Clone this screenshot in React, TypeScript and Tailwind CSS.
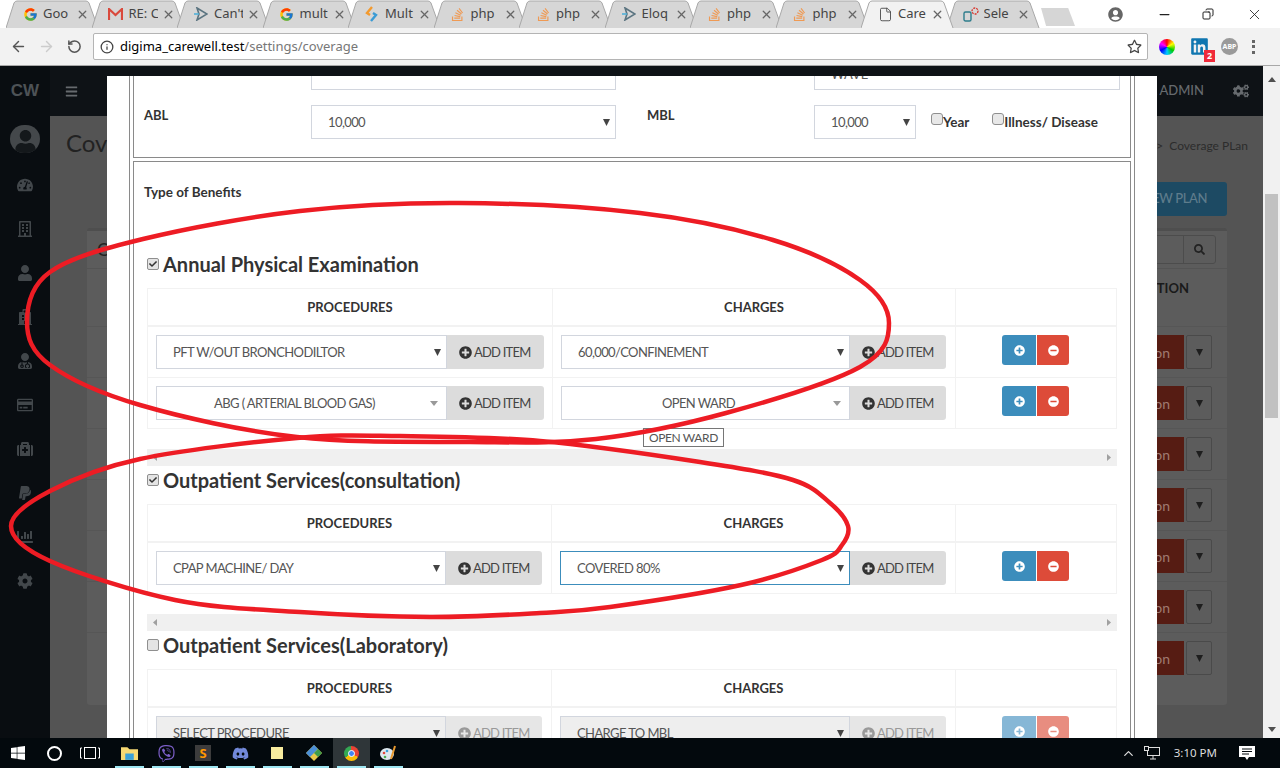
import React from 'react';
import { FaCheck, FaChartBar, FaCog, FaCogs, FaDiscord, FaHospital, FaLinkedin, FaMedkit, FaMinusCircle, FaPaypal, FaPlusCircle, FaRegBuilding, FaRegCreditCard, FaSearch, FaStackOverflow, FaTachometerAlt, FaUser, FaUserCircle, FaUserMd, FaViber, FaWindows, FaBars, FaRegStar } from 'react-icons/fa';
import { FcGoogle } from 'react-icons/fc';
import { ArrowLeft, ArrowRight, ChevronUp, File, Info, Minus, RotateCw, X, Copy } from 'lucide-react';

const FONT = 'font-["Lato","Noto_Sans",sans-serif]';

function Caret({ muted, dark }: { muted?: boolean; dark?: boolean }) {
    if (muted) {
        return (
            <svg width="8" height="5" viewBox="0 0 8 5" className="shrink-0 mr-[3px]">
                <path d="M0 0H8L4 5Z" fill="#999" />
            </svg>
        );
    }
    return (
        <svg width="7" height="7" viewBox="0 0 7 7" className="shrink-0">
            <path d="M0 0H7L3.5 7Z" fill={dark ? '#1e1e1e' : '#444'} />
        </svg>
    );
}

function Arrowish() {
    return (
        <svg width="14" height="14" viewBox="0 0 14 14">
            <path d="M3 1L13 7L3 13L5 7Z" fill="none" stroke="#5b7480" strokeWidth="1.6" />
            <path d="M0 7H5" stroke="#4fb0d8" strokeWidth="1.6" />
        </svg>
    );
}

const tabs: { title: string; icon: React.ReactNode; active?: boolean }[] = [
    { title: 'Goo', icon: <FcGoogle size={15} /> },
    {
        title: 'RE: C',
        icon: (
            <svg width="15" height="13" viewBox="0 0 15 13">
                <path d="M1 12V1L7.5 7L14 1V12" fill="none" stroke="#d9493c" strokeWidth="2.2" />
            </svg>
        ),
    },
    { title: "Can't", icon: <Arrowish /> },
    { title: 'mult', icon: <FcGoogle size={15} /> },
    {
        title: 'Mult',
        icon: (
            <svg width="14" height="16" viewBox="0 0 14 16">
                <path d="M7 1L2 7L5 9" fill="none" stroke="#f39a2e" strokeWidth="2.4" />
                <path d="M8 7L11 9L6 15" fill="none" stroke="#3a9bd5" strokeWidth="2.4" />
            </svg>
        ),
    },
    { title: 'php', icon: <FaStackOverflow size={15} color="#ef9a54" /> },
    { title: 'php', icon: <FaStackOverflow size={15} color="#ef9a54" /> },
    { title: 'Eloq', icon: <Arrowish /> },
    { title: 'php', icon: <FaStackOverflow size={15} color="#ef9a54" /> },
    { title: 'php', icon: <FaStackOverflow size={15} color="#ef9a54" /> },
    { title: 'Care', icon: <File size={15} strokeWidth={1.4} color="#444" />, active: true },
    {
        title: 'Sele',
        icon: (
            <svg width="16" height="15" viewBox="0 0 16 15">
                <rect x="1" y="5" width="7" height="9" rx="1.5" fill="none" stroke="#2e7d8c" strokeWidth="1.4" />
                <circle cx="12" cy="4" r="3" fill="none" stroke="#d9342b" strokeWidth="1.3" strokeDasharray="2 1" />
            </svg>
        ),
    },
];

function Tab({ title, icon, active }: { title: string; icon: React.ReactNode; active?: boolean }) {
    return (
        <div className={`relative w-[93px] h-[28px] shrink-0 -mr-[7.5px] flex items-center pl-[16px] ${active ? 'z-10' : ''}`}>
            <svg className="absolute inset-0" width="93" height="28" viewBox="0 0 93 28">
                <path d="M0 28L8 3Q9 1 11 1H80Q82 1 83 3L92 28" fill={active ? '#f2f2f2' : '#d6d6d6'} stroke="#a8a8a8" />
            </svg>
            <div className="relative w-[16px] flex justify-center shrink-0">{icon}</div>
            <span className="relative ml-[5px] w-[29px] overflow-hidden whitespace-nowrap text-[13px] text-[#444]">{title}</span>
            <X className="relative ml-[4px] shrink-0" size={13} strokeWidth={2.4} color="#666" />
        </div>
    );
}

function BrowserChrome() {
    return (
        <div className="shrink-0 font-['Noto_Sans',sans-serif]">
            <div className="h-[28px] bg-white flex relative pl-[6px]">
                {tabs.map((t, i) => (
                    <Tab key={i} {...t} />
                ))}
                <div className="ml-[9px] mt-[8px] w-[34px] h-[18px] bg-[#d6d6d6] [clip-path:polygon(0_0,80%_0,100%_100%,15%_100%)]" />
                <div className="absolute right-0 top-0 h-[28px] flex items-center">
                    <FaUserCircle size={15} color="#666" className="mr-[34px]" />
                    <Minus size={15} color="#222" className="mr-[30px]" />
                    <Copy size={12} color="#222" className="mr-[32px] -scale-x-100" />
                    <X size={17} strokeWidth={1.2} color="#222" className="mr-[17px]" />
                </div>
            </div>
            <div className="h-[38px] bg-[#f2f2f2] border-b border-[#a8a8a8] flex items-center relative">
                <ArrowLeft size={17} color="#555" className="ml-[10px]" />
                <ArrowRight size={17} color="#ccc" className="ml-[11px]" />
                <RotateCw size={15} color="#555" strokeWidth={2.4} className="ml-[12px] -scale-x-100" />
                <div className="ml-[11px] w-[1055px] h-[27px] bg-white border border-[#b4b4b4] rounded-[2px] flex items-center pl-[6px]">
                    <Info size={14} color="#444" strokeWidth={2.2} />
                    <span className="ml-[6px] text-[13px] text-black">digima_carewell.test</span>
                    <span className="text-[13px] text-[#777]">/settings/coverage</span>
                    <FaRegStar size={15} color="#444" className="ml-auto mr-[5px]" />
                </div>
                <div
                    className="ml-[11px] w-[16px] h-[16px] rounded-full"
                    style={{ background: 'conic-gradient(#f00,#ff0,#0c0,#0cf,#00f,#f0f,#f00)' }}
                />
                <div className="relative ml-[15px]">
                    <FaLinkedin size={19} color="#0f76b0" />
                    <span className="absolute -right-[6px] -bottom-[6px] w-[11px] h-[12px] bg-[#f02a3a] text-white text-[9px] font-bold leading-[12px] text-center">2</span>
                </div>
                <div className="ml-[12px] w-[17px] h-[17px] rounded-full bg-[#9a9a9a] text-white text-[7px] font-bold leading-[17px] text-center">ABP</div>
                <div className="ml-[14px] flex flex-col gap-[2.5px]">
                    <span className="w-[3px] h-[3px] bg-[#666]" />
                    <span className="w-[3px] h-[3px] bg-[#666]" />
                    <span className="w-[3px] h-[3px] bg-[#666]" />
                </div>
            </div>
        </div>
    );
}

const sideIcons = [FaTachometerAlt, FaRegBuilding, FaUser, FaHospital, FaUserMd, FaRegCreditCard, FaMedkit, FaPaypal, FaChartBar, FaCog];

function BackgroundPage() {
    return (
        <div className={`flex h-full flex-1 min-w-0 ${FONT}`}>
            <div className="w-[50px] shrink-0 bg-[#090d11] flex flex-col items-center">
                <div className="h-[50px] w-full flex items-center justify-center text-[#4d5256] font-bold text-[17px] font-['Liberation_Sans',sans-serif]">CW</div>
                <div className="mt-[9px] w-[30px] h-[28px] rounded-full bg-[#44484b] overflow-hidden flex items-end justify-center">
                    <FaUser size={23} color="#14181b" />
                </div>
                <div className="mt-[24px] flex flex-col gap-[28px] items-center">
                    {sideIcons.map((Icon, i) => (
                        <Icon key={i} size={16} color="#42474b" />
                    ))}
                </div>
            </div>
            <div className="flex-1 min-w-0 bg-[#545454] flex flex-col">
                <div className="h-[50px] shrink-0 bg-[#0e1216] flex items-center pl-[15px] pr-[14px] text-[#666a6e]">
                    <FaBars size={13} />
                    <span className="ml-auto text-[13px] font-medium">GENERAL ADMIN</span>
                    <FaCogs size={16} className="ml-[29px]" />
                </div>
                <div className="h-[54px] shrink-0 flex items-center justify-between pl-[16px] pr-[15px] text-[#222]">
                    <span className="text-[24px]">Coverage</span>
                    <span className="text-[12px] mt-[6px] text-[#2c2c2c]">&gt;&nbsp; Coverage PLan</span>
                </div>
                <div className="mt-[12px] mr-[36px] self-end h-[34px] px-[20px] flex items-center bg-[#1d4a63] rounded-[3px] text-[13px] tracking-[-0.4px] font-medium text-[#5f7c8c]">ADD NEW PLAN</div>
                <div className="mt-[12px] ml-[37px] mr-[36px] h-[477px] bg-[#5c5c5c] border-t-[3px] border-[#4e4e4e] rounded-[3px] flex flex-col">
                    <div className="h-[38px] shrink-0 border-b border-[#545454] flex items-center pl-[10px] pr-[11px] text-[#222] text-[18px]">
                        <span>Coverage</span>
                        <div className="ml-auto w-[120px] h-[29px] border border-[#4c4c4c] rounded-[3px] flex justify-end">
                            <div className="w-[32px] flex items-center justify-center border-l border-[#4c4c4c]">
                                <FaSearch size={11} color="#222" />
                            </div>
                        </div>
                    </div>
                    <div className="h-[57px] shrink-0 flex justify-end pr-[38px] pt-[10px] text-[#1a1a1a] text-[13px] font-bold">ACTION</div>
                    {[0, 1, 2, 3, 4, 5, 6].map((i) => (
                        <div key={i} className="h-[51px] shrink-0 border-t border-[#565656] flex items-center justify-end pr-[15px]">
                            <div className="w-[80px] h-[34px] bg-[#561c13] text-[#a07a70] text-[14px] flex items-center justify-end pr-[14px]">Action</div>
                            <div className="ml-[2px] w-[26px] h-[34px] border border-[#4a4a4a] rounded-[2px] flex items-center justify-center">
                                <Caret dark />
                            </div>
                        </div>
                    ))}
                </div>
            </div>
        </div>
    );
}

function Select({ text, width, center, focus, disabled, muted }: { text: string; width: string; center?: boolean; focus?: boolean; disabled?: boolean; muted?: boolean }) {
    return (
        <div
            className={`${width} h-[34px] shrink-0 flex items-center border pr-[5px] text-[13px] tracking-[-0.6px] text-[#555] ${focus ? 'border-[#3c8dbc]' : 'border-[#d2d6de]'} ${disabled ? 'bg-[#eeeeee]' : 'bg-white'}`}
        >
            <span className={`flex-1 pt-[2px] whitespace-nowrap ${center ? 'text-center pl-[2px]' : 'pl-[16px]'}`}>{text}</span>
            <Caret muted={muted} />
        </div>
    );
}

function AddItem({ width, disabled }: { width: string; disabled?: boolean }) {
    return (
        <div className={`${width} h-[34px] shrink-0 rounded-r-[3px] flex items-center pl-[12px] gap-[2px] text-[13px] tracking-[-0.8px] ${disabled ? 'bg-[#e6e6e6] text-[#999]' : 'bg-[#dcdcdc] text-[#444]'}`}>
            <FaPlusCircle size={13} color={disabled ? '#999' : '#333'} />
            <span className="pt-[2px] whitespace-nowrap">ADD ITEM</span>
        </div>
    );
}

function Actions({ disabled }: { disabled?: boolean }) {
    return (
        <div className="flex gap-[1px] pl-[46px]">
            <div className={`w-[34px] h-[30px] rounded-l-[3px] flex items-center justify-center ${disabled ? 'bg-[#86b7d6]' : 'bg-[#3c8dbc]'}`}>
                <FaPlusCircle size={11} color="white" />
            </div>
            <div className={`w-[32px] h-[30px] rounded-r-[3px] flex items-center justify-center ${disabled ? 'bg-[#e88d80]' : 'bg-[#dd4b39]'}`}>
                <FaMinusCircle size={11} color="white" />
            </div>
        </div>
    );
}

type Row = { proc: string; charge: string; center?: boolean; focus?: boolean; disabled?: boolean };

function BenefitTable({ rows, narrow }: { rows: Row[]; narrow?: boolean }) {
    const cols = narrow ? 'grid-cols-[404px_404px_162px]' : 'grid-cols-[405px_403px_162px]';
    const head = 'flex items-center justify-center pt-[2px] text-[13px] font-bold text-[#333] border-r border-[#f2f2f2] h-full';
    return (
        <div className="w-[970px] border border-[#f2f2f2] border-b-0">
            <div className={`grid ${cols} h-[38px] border-b-2 border-[#f2f2f2]`}>
                <div className={head}>PROCEDURES</div>
                <div className={head}>CHARGES</div>
                <div />
            </div>
            {rows.map((r, i) => (
                <div key={i} className={`grid ${cols} h-[51px] border-b border-[#f2f2f2]`}>
                    <div className="flex pt-[8px] pl-[8px] border-r border-[#f2f2f2]">
                        <Select text={r.proc} width={narrow ? 'w-[290px]' : 'w-[291px]'} center={r.center} disabled={r.disabled} muted={r.center} />
                        <AddItem width={narrow ? 'w-[96px]' : 'w-[97px]'} disabled={r.disabled} />
                    </div>
                    <div className="flex pt-[8px] pl-[8px] border-r border-[#f2f2f2]">
                        <Select text={r.charge} width={narrow ? 'w-[290px]' : 'w-[289px]'} center={r.center} focus={r.focus} disabled={r.disabled} muted={r.center} />
                        <AddItem width="w-[96px]" disabled={r.disabled} />
                    </div>
                    <div className="pt-[8px]">
                        <Actions disabled={r.disabled} />
                    </div>
                </div>
            ))}
        </div>
    );
}

function ScrollStrip() {
    return (
        <div className="w-[970px] h-[17px] bg-[#f0f0f0] flex items-center justify-between px-[6px]">
            <svg width="4" height="7" viewBox="0 0 4 7"><path d="M4 0V7L0 3.5Z" fill="#a0a0a0" /></svg>
            <svg width="4" height="7" viewBox="0 0 4 7"><path d="M0 0V7L4 3.5Z" fill="#a0a0a0" /></svg>
        </div>
    );
}

function Section({ title, checked }: { title: string; checked: boolean }) {
    return (
        <div className="h-[24px] flex items-center gap-[4px]">
            <div className="w-[12px] h-[12px] bg-[#e4e4e4] border border-[#8f8f8f] rounded-[2px] flex items-center justify-center">
                {checked && <FaCheck size={8} color="#333" />}
            </div>
            <span className="text-[20px] font-bold text-[#333] whitespace-nowrap">{title}</span>
        </div>
    );
}

function SmallCheck({ label }: { label: string }) {
    return (
        <div className="flex items-start">
            <div className="w-[12px] h-[12px] mt-[7px] bg-[#e8e8e8] border border-[#8f8f8f] rounded-[3px]" />
            <span className="mt-[6px] text-[13.5px] font-bold text-[#333] whitespace-nowrap">{label}</span>
        </div>
    );
}

function Modal() {
    return (
        <div className={`absolute left-[107px] top-[10px] bottom-0 w-[1050px] bg-white overflow-hidden px-[22px] ${FONT}`}>
            <div className="h-full border-x border-[#8a8a8a] px-[3px]">
                <div className="h-[82px] border-x border-b border-[#8a8a8a] pl-[10px]">
                    <div className="flex h-[14px] pl-[167px]">
                        <div className="w-[305px] h-[14px] border-x border-b border-[#d2d6de]" />
                        <div className="ml-[198px] w-[306px] h-[14px] border-x border-b border-[#d2d6de] overflow-hidden pl-[16px] text-[13px] text-[#555] leading-[4px]">
                            <div className="-mt-[4px]">WAVE</div>
                        </div>
                    </div>
                    <div className="mt-[15px] flex items-start">
                        <span className="w-[167px] mt-[1px] text-[13px] font-bold text-[#333]">ABL</span>
                        <Select text="10,000" width="w-[305px]" />
                        <span className="ml-[31px] w-[167px] mt-[1px] text-[13px] font-bold text-[#333]">MBL</span>
                        <Select text="10,000" width="w-[102px]" />
                        <div className="ml-[15px] flex gap-[23px] mt-[1px]">
                            <SmallCheck label="Year" />
                            <SmallCheck label="Illness/ Disease" />
                        </div>
                    </div>
                </div>
                <div className="mt-[3px] h-[700px] border border-[#8a8a8a] pl-[13px]">
                    <div className="pt-[20px] h-[40px] text-[13.5px] font-bold text-[#333]">
                        <span className="-ml-[3px]">Type of Benefits</span>
                    </div>
                    <div className="mt-[50px]"><Section title="Annual Physical Examination" checked /></div>
                    <div className="mt-[12px]">
                        <BenefitTable
                            rows={[
                                { proc: 'PFT W/OUT BRONCHODILTOR', charge: '60,000/CONFINEMENT' },
                                { proc: 'ABG ( ARTERIAL BLOOD GAS)', charge: 'OPEN WARD', center: true },
                            ]}
                        />
                    </div>
                    <div className="mt-[20px]"><ScrollStrip /></div>
                    <div className="mt-[2px]"><Section title="Outpatient Services(consultation)" checked /></div>
                    <div className="mt-[12px]">
                        <BenefitTable narrow rows={[{ proc: 'CPAP MACHINE/ DAY', charge: 'COVERED 80%', focus: true }]} />
                    </div>
                    <div className="mt-[20px]"><ScrollStrip /></div>
                    <div className="mt-[2px]"><Section title="Outpatient Services(Laboratory)" checked={false} /></div>
                    <div className="mt-[12px]">
                        <BenefitTable narrow rows={[{ proc: 'SELECT PROCEDURE', charge: 'CHARGE TO MBL', disabled: true }]} />
                    </div>
                </div>
            </div>
            <div className="absolute left-[536px] top-[352px] h-[19px] px-[5px] bg-white border border-[#767676] text-[12px] tracking-[-0.4px] leading-[17px] text-[#555] whitespace-nowrap">OPEN WARD</div>
        </div>
    );
}

// closed smooth curve through the hand drawn points
function smooth(pts: number[][]) {
    const n = pts.length;
    let d = `M${pts[0][0]} ${pts[0][1]}`;
    for (let i = 0; i < n; i++) {
        const p0 = pts[(i - 1 + n) % n];
        const p1 = pts[i];
        const p2 = pts[(i + 1) % n];
        const p3 = pts[(i + 2) % n];
        const c1x = p1[0] + (p2[0] - p0[0]) / 6;
        const c1y = p1[1] + (p2[1] - p0[1]) / 6;
        const c2x = p2[0] - (p3[0] - p1[0]) / 6;
        const c2y = p2[1] - (p3[1] - p1[1]) / 6;
        d += `C${c1x} ${c1y} ${c2x} ${c2y} ${p2[0]} ${p2[1]}`;
    }
    return d;
}

const loopOne = [[27, 322], [50, 272], [143, 239], [300, 211], [459, 203], [640, 213], [773, 240], [860, 280], [889, 323], [860, 367], [726, 413], [596, 439], [470, 442], [297, 437], [140, 405], [50, 365]];
const loopTwo = [[11, 526], [50, 491], [140, 459], [297, 438], [400, 436], [540, 441], [700, 462], [793, 480], [830, 503], [848, 526], [842, 545], [822, 560], [741, 585], [610, 607], [540, 613], [430, 617], [300, 612], [175, 600], [50, 561]];

function RedLoops() {
    return (
        <svg className="absolute left-0 top-0 pointer-events-none" width="1280" height="738" viewBox="0 0 1280 738">
            <path d={smooth(loopOne)} fill="none" stroke="#ed1c24" strokeWidth="4.5" />
            <path d={smooth(loopTwo)} fill="none" stroke="#ed1c24" strokeWidth="4.5" />
        </svg>
    );
}

function Taskbar() {
    const apps: { icon: React.ReactNode; active?: boolean }[] = [
        {
            icon: (
                <svg width="17" height="15" viewBox="0 0 16 14">
                    <path d="M0 1H6L8 3H16V13H0Z" fill="#f6d873" />
                    <rect x="4" y="7" width="8" height="6" fill="#3aa0d8" />
                </svg>
            ),
        },
        { icon: <FaViber size={17} color="#7b5ec6" /> },
        {
            icon: (
                <div className="w-[16px] h-[16px] bg-[#3c3c3c] flex items-center justify-center text-[#ff9800] text-[13px] font-bold leading-none">S</div>
            ),
        },
        { icon: <FaDiscord size={17} color="#7289da" /> },
        { icon: <div className="w-[12px] h-[12px] bg-[#f7ec9e]" /> },
        {
            icon: (
                <svg width="16" height="16" viewBox="0 0 16 16">
                    <path d="M8 0L16 8L8 16L0 8Z" fill="#e8c94a" />
                    <path d="M8 0L12 4L4 12L0 8Z" fill="#4a8fd8" />
                    <path d="M12 4L16 8L12 12L8 8Z" fill="#3f9b4a" />
                </svg>
            ),
        },
        {
            active: true,
            icon: (
                <div
                    className="w-[15px] h-[15px] rounded-full flex items-center justify-center"
                    style={{ background: 'conic-gradient(#ea4335 0 33%,#fbbc05 33% 66%,#34a853 66% 100%)' }}
                >
                    <div className="w-[7px] h-[7px] rounded-full bg-[#4285f4] border border-white" />
                </div>
            ),
        },
        {
            icon: (
                <svg width="16" height="16" viewBox="0 0 16 16">
                    <ellipse cx="7" cy="9" rx="7" ry="6" fill="#dfe8ee" />
                    <circle cx="4" cy="8" r="1.3" fill="#e0483c" />
                    <circle cx="7" cy="6" r="1.3" fill="#3aa0d8" />
                    <circle cx="5" cy="12" r="1.3" fill="#4caf50" />
                    <path d="M15 1L11 14" stroke="#e89a30" strokeWidth="2" />
                </svg>
            ),
        },
    ];
    return (
        <div className="h-[30px] shrink-0 bg-[#03090d] flex items-center relative font-['Noto_Sans',sans-serif]">
            <FaWindows size={16} color="white" className="ml-[10px]" />
            <div className="ml-[21px] w-[15px] h-[15px] rounded-full border-2 border-white" />
            <svg width="20" height="12" viewBox="0 0 20 12" className="ml-[18px]">
                <rect x="4.5" y="0.5" width="11" height="11" fill="none" stroke="white" />
                <path d="M2 1H0.5V11H2M18 1H19.5V11H18" fill="none" stroke="white" />
            </svg>
            <div className="ml-[10.5px] flex">
                {apps.map((a, i) => (
                    <div key={i} className={`w-[37px] h-[30px] flex items-center justify-center relative ${a.active ? 'bg-[#2f3639]' : ''}`}>
                        {a.icon}
                        <span className="absolute bottom-0 left-[4px] right-[4px] h-[2px] bg-[#9ee6f2]" />
                    </div>
                ))}
            </div>
            <ChevronUp size={15} color="#ddd" className="ml-auto" />
            <svg width="16" height="14" viewBox="0 0 16 14" className="ml-[8px]">
                <rect x="3.5" y="1.5" width="12" height="8" fill="none" stroke="#ddd" />
                <path d="M9 10V13M6 13H12" stroke="#ddd" />
                <rect x="0.5" y="0.5" width="4" height="4" fill="#03090d" stroke="#ddd" />
            </svg>
            <span className="ml-[14px] text-[11.5px] text-[#ddd]">3:10 PM</span>
            <svg width="16" height="16" viewBox="0 0 16 16" className="ml-[22px] mr-[25px]">
                <path d="M0 1H16V12H10L8 15L6 12H0Z" fill="white" />
                <path d="M3 4H13M3 6.5H13M3 9H10" stroke="#03090d" />
            </svg>
        </div>
    );
}

function PageScrollbar() {
    return (
        <div className="w-[17px] shrink-0 h-full bg-[#f1f1f1] flex flex-col items-center">
            <svg width="8" height="5" viewBox="0 0 8 5" className="mt-[11px]"><path d="M0 5H8L4 0Z" fill="#505050" /></svg>
            <div className="mt-[112px] w-[13px] h-[224px] bg-[#c1c1c1]" />
            <svg width="8" height="5" viewBox="0 0 8 5" className="mt-auto mb-[6px]"><path d="M0 0H8L4 5Z" fill="#505050" /></svg>
        </div>
    );
}

export default function App() {
    return (
        <div className="h-[768px] w-[1280px] overflow-hidden flex flex-col relative bg-white">
            <BrowserChrome />
            <div className="flex-1 min-h-0 relative flex">
                <BackgroundPage />
                <PageScrollbar />
                <Modal />
            </div>
            <Taskbar />
            <RedLoops />
        </div>
    );
}
